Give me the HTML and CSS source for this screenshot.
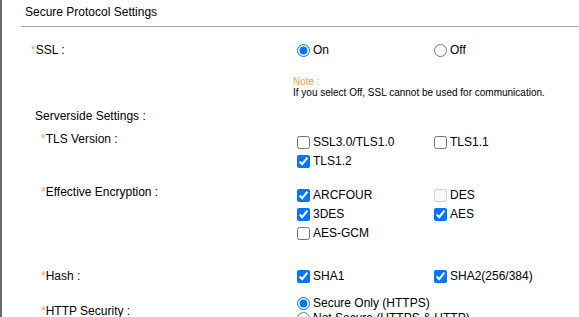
FILE: index.html
```html
<!DOCTYPE html>
<html lang="en">
  <head>
    <meta charset="UTF-8" />
    <meta name="viewport" content="width=device-width, initial-scale=1.0" />
    <title>Secure Protocol Settings</title>
    <link rel="stylesheet" href="styles.css">
  </head>
  <body>
    <div class="panel">
      <!-- Section title with the rule under it -->
      <div class="section-head">Secure Protocol Settings</div>

      <div class="settings">
        <!-- SSL on / off -->
        <div class="field field-ssl">
          <div class="field-label"><span class="req">*</span>SSL :</div>
          <div class="field-body">
            <div class="choices">
              <label class="choice"><input type="radio" name="ssl" checked /><span>On</span></label>
              <label class="choice"><input type="radio" name="ssl" /><span>Off</span></label>
            </div>
            <div class="note">
              <span class="note-title">Note :</span>
              <span>If you select Off, SSL cannot be used for communication.</span>
            </div>
          </div>
        </div>

        <div class="group-title">Serverside Settings :</div>

        <!-- TLS versions -->
        <div class="field field-tls sub">
          <div class="field-label"><span class="req">*</span>TLS Version :</div>
          <div class="field-body">
            <div class="choices">
              <label class="choice"><input type="checkbox" /><span>SSL3.0/TLS1.0</span></label>
              <label class="choice"><input type="checkbox" /><span>TLS1.1</span></label>
              <label class="choice"><input type="checkbox" checked /><span>TLS1.2</span></label>
            </div>
          </div>
        </div>

        <!-- Ciphers -->
        <div class="field field-enc sub">
          <div class="field-label"><span class="req">*</span>Effective Encryption :</div>
          <div class="field-body">
            <div class="choices">
              <label class="choice"><input type="checkbox" checked /><span>ARCFOUR</span></label>
              <label class="choice"><input type="checkbox" disabled /><span>DES</span></label>
              <label class="choice"><input type="checkbox" checked /><span>3DES</span></label>
              <label class="choice"><input type="checkbox" checked /><span>AES</span></label>
              <label class="choice"><input type="checkbox" /><span>AES-GCM</span></label>
            </div>
          </div>
        </div>

        <!-- Hash -->
        <div class="field field-hash sub">
          <div class="field-label"><span class="req">*</span>Hash :</div>
          <div class="field-body">
            <div class="choices">
              <label class="choice"><input type="checkbox" checked /><span>SHA1</span></label>
              <label class="choice"><input type="checkbox" checked /><span>SHA2(256/384)</span></label>
            </div>
          </div>
        </div>

        <!-- HTTP security -->
        <div class="field field-http sub">
          <div class="field-label"><span class="req">*</span>HTTP Security :</div>
          <div class="field-body">
            <div class="choices single">
              <label class="choice"><input type="radio" name="http" checked /><span>Secure Only (HTTPS)</span></label>
              <label class="choice"><input type="radio" name="http" /><span>Not Secure (HTTPS &amp; HTTP)</span></label>
            </div>
          </div>
        </div>
      </div>
    </div>
  </body>
</html>
```

FILE: styles.css
```css
html,
body {
  height: 100%;
  overflow: hidden;
}
body {
  margin: 0;
  font-family: "Liberation Sans", Arial, sans-serif;
  font-size: 12px;
  color: #000;
  background-color: #fff;
}
.panel {
  border-left: 2px solid #6a6a6a; /* dark edge on the left */
  min-height: 100%;
}
.section-head {
  margin-left: 19px;
  padding: 5px 4px 0;
  height: 21px;
  line-height: 15px;
  border-bottom: 1px solid #a9a9a9;
}
.settings {
  padding: 14px 0 0 29px;
}
.field {
  display: flex;
}
.field-label {
  flex: none;
  width: 265px;
  line-height: 19px;
  box-sizing: border-box;
}
.sub .field-label {
  padding-left: 10px; /* nested under Serverside Settings */
}
.req {
  color: #f5a266;
}
.field-body {
  flex: 1;
}
.choices {
  display: grid;
  grid-template-columns: 137px auto;
}
.choices.single {
  grid-template-columns: auto;
}
.choice {
  display: flex;
  align-items: center;
  height: 19px;
  line-height: 19px;
  white-space: nowrap;
}
.choices.single .choice {
  height: 15px; /* radios stacked tighter */
}
.choice input {
  margin: 0 3px 0 1px;
  width: 13px;
  height: 13px;
}
.note {
  margin: 16px 0 0 -3px;
  font-size: 10px;
  line-height: 11px;
}
.note-title {
  display: block;
  color: #f59a4c;
}
.group-title {
  margin-top: 9px;
  padding-left: 4px;
  line-height: 19px;
}
.field-tls {
  margin-top: 4px;
}
.field-tls .choices,
.field-enc .choices {
  padding-top: 3px;
}
.field-enc {
  margin-top: 12px;
}
.field-hash {
  margin-top: 24px;
}
.field-http {
  margin-top: 10px;
}
.field-http .field-label {
  padding-top: 6px;
}
```
